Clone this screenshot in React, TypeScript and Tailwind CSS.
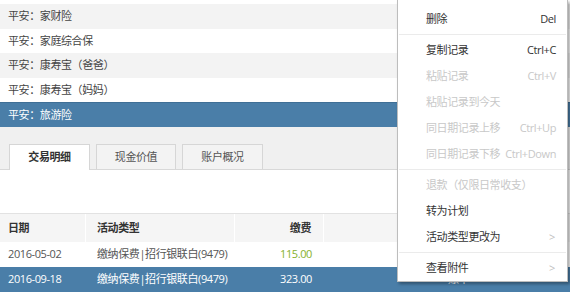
import React from "react";

const font = { fontFamily: '"Open Sans","Noto Sans CJK SC",sans-serif' };

type Item = { label: string; key?: string; disabled?: boolean; arrow?: boolean } | "sep";

const items: Item[] = [
  { label: "删除", key: "Del" },
  "sep",
  { label: "复制记录", key: "Ctrl+C" },
  { label: "粘贴记录", key: "Ctrl+V", disabled: true },
  { label: "粘贴记录到今天", disabled: true },
  { label: "同日期记录上移", key: "Ctrl+Up", disabled: true },
  { label: "同日期记录下移", key: "Ctrl+Down", disabled: true },
  "sep",
  { label: "退款（仅限日常收支）", disabled: true },
  { label: "转为计划" },
  { label: "活动类型更改为", arrow: true },
  "sep",
  { label: "查看附件", arrow: true },
];

export default function App() {
  const rows = [
    { t: "平安：家财险", bg: "bg-[#f3f3f3]", h: "h-[25px]" },
    { t: "平安：家庭综合保", bg: "bg-white", h: "h-[24px]" },
    { t: "平安：康寿宝（爸爸）", bg: "bg-[#f3f3f3]", h: "h-[25px]" },
    { t: "平安：康寿宝（妈妈）", bg: "bg-white", h: "h-[24px]" },
  ];
  return (
    <div className="relative w-[570px] h-[303px] overflow-hidden bg-white text-[11px] whitespace-nowrap tracking-[-0.4px]" style={font}>
      <div className="pt-[4px]">
        {rows.map((r) => (
          <div key={r.t} className={`${r.h} ${r.bg} flex items-center pl-[8px] text-[#444]`}>
            {r.t}
          </div>
        ))}
        <div className="h-[25px] bg-[#4a7ea8] flex items-center pl-[8px] text-white border-t border-[#3f6f96]">
          平安：旅游险
        </div>
      </div>
      <div className="h-[43px] bg-[#f0f0f0] border-b border-[#d8d8d8] flex items-end pl-[9px] gap-[6px]">
        <div className="w-[81px] h-[26px] bg-white border border-b-0 border-[#d6d6d6] flex items-center justify-center font-bold text-[#333] -mb-px">
          交易明细
        </div>
        <div className="w-[80px] h-[25px] bg-[#f3f3f3] border border-b-0 border-[#d6d6d6] flex items-center justify-center text-[#555]">
          现金价值
        </div>
        <div className="w-[81px] h-[25px] bg-[#f3f3f3] border border-b-0 border-[#d6d6d6] flex items-center justify-center text-[#555]">
          账户概况
        </div>
      </div>
      <div className="h-[43px] bg-white" />
      <div className="h-[29px] bg-[#f5f5f5] border-t border-[#e2e2e2] flex font-bold text-[#333]">
        <div className="w-[86px] flex items-center pl-[8px] border-r border-white">日期</div>
        <div className="w-[149px] flex items-center pl-[11px] border-r border-white">活动类型</div>
        <div className="w-[89px] flex items-center justify-end pr-[12px] border-r border-white">缴费</div>
        <div className="flex-1" />
      </div>
      <div className="h-[25px] flex text-[#555] bg-white">
        <div className="w-[86px] flex items-center pl-[8px]">2016-05-02</div>
        <div className="w-[149px] flex items-center pl-[11px]">缴纳保费|招行银联白(9479)</div>
        <div className="w-[89px] flex items-center justify-end pr-[12px] text-[#86b12d]">115.00</div>
      </div>
      <div className="h-[25px] flex text-white bg-[#4a7ea8]">
        <div className="w-[86px] flex items-center pl-[8px]">2016-09-18</div>
        <div className="w-[149px] flex items-center pl-[11px]">缴纳保费|招行银联白(9479)</div>
        <div className="w-[89px] flex items-center justify-end pr-[12px]">323.00</div>
        <div className="flex-1 flex items-center pl-[124px]">账单</div>
      </div>

      <div className="absolute left-[397px] top-0 w-[171px] bg-white border border-t-0 border-[#bdbdbd] shadow-[2px_2px_3px_rgba(0,0,0,0.35)] pt-[6px]">
        {items.map((it, i) =>
          it === "sep" ? (
            <div key={i} className="h-px bg-[#ebebeb] my-[2px] mx-[1px]" />
          ) : (
            <div
              key={i}
              className={`h-[26px] flex items-center pl-[28px] pr-[11px] ${it.disabled ? "text-[#c8c8c8]" : "text-[#333]"}`}
            >
              <span className="flex-1">{it.label}</span>
              {it.key && <span>{it.key}</span>}
              {it.arrow && <span className="text-[#c0c0c0] text-[11px] pr-[1px]">&gt;</span>}
            </div>
          )
        )}
      </div>
    </div>
  );
}
